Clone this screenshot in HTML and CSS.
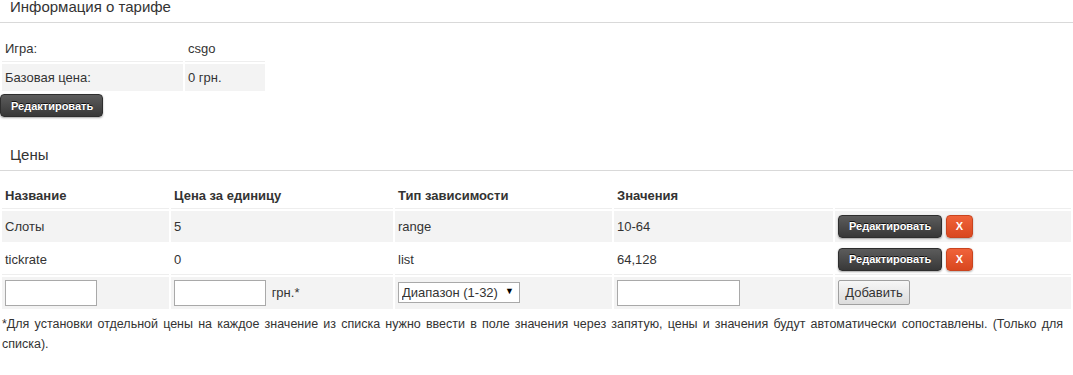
FILE: index.html
```
<!DOCTYPE html>
<html lang="ru">
<head>
    <meta charset="UTF-8">
    <title>Информация о тарифе</title>
    <link rel="stylesheet" href="styles.css">
</head>
<body>
    <h3 class="section-title">Информация о тарифе</h3>
    <table class="info-table">
        <tr>
            <td class="info-label">Игра:</td>
            <td class="info-value">csgo</td>
        </tr>
        <tr class="odd">
            <td class="info-label">Базовая цена:</td>
            <td class="info-value">0 грн.</td>
        </tr>
    </table>
    <button class="btn-dark">Редактировать</button>

    <h3 class="section-title second">Цены</h3>
    <table class="prices-table">
        <colgroup>
            <col style="width: 167px">
            <col style="width: 222px">
            <col style="width: 217px">
            <col style="width: 219px">
            <col>
        </colgroup>
        <tr class="head">
            <th>Название</th>
            <th>Цена за единицу</th>
            <th>Тип зависимости</th>
            <th>Значения</th>
            <th></th>
        </tr>
        <tr class="odd">
            <td>Слоты</td>
            <td>5</td>
            <td>range</td>
            <td>10-64</td>
            <td><button class="btn-dark">Редактировать</button> <button class="btn-red">X</button></td>
        </tr>
        <tr>
            <td>tickrate</td>
            <td>0</td>
            <td>list</td>
            <td>64,128</td>
            <td><button class="btn-dark">Редактировать</button> <button class="btn-red">X</button></td>
        </tr>
        <tr class="odd form-row">
            <td><input type="text" class="field"></td>
            <td><input type="text" class="field"> <span class="unit">грн.*</span></td>
            <td>
                <span class="select-wrap">
                    <select class="type-select">
                        <option>Диапазон (1-32)</option>
                        <option>Список</option>
                    </select>
                </span>
            </td>
            <td><input type="text" class="field wide"></td>
            <td><button class="btn-add">Добавить</button></td>
        </tr>
    </table>
    <p class="note">*Для установки отдельной цены на каждое значение из списка нужно ввести в поле значения через запятую, цены и значения будут автоматически сопоставлены. (Только для списка).</p>
</body>
</html>
```

FILE: styles.css
```
body {
    margin: 0;
    font-family: "Liberation Sans", Arial, sans-serif;
    font-size: 13px;
    color: #333;
    background: #fff;
}

.section-title {
    margin: 0;
    padding: 0 10px 5px;
    height: 17px;
    line-height: 14px;
    font-size: 15px;
    font-weight: normal;
    color: #333;
    border-bottom: 1px solid #d9d9d9;
}

.section-title.second {
    margin-top: 31px;
    line-height: 14px;
}

table {
    border-spacing: 2px;
}

td, th {
    padding: 0 3px;
    text-align: left;
    border-bottom: 1px solid #eeeeee;
}

tr.odd td {
    background: #f3f3f3;
    border-bottom-color: #f3f3f3;
}

.info-table {
    margin-top: 10px;
}

.info-table td {
    height: 26px;
}

.info-label {
    width: 175px;
}

.info-value {
    width: 74px;
}

.btn-dark {
    height: 23px;
    padding: 0 10px;
    font-family: "Liberation Sans", Arial, sans-serif;
    font-size: 11px;
    font-weight: bold;
    color: #fff;
    text-shadow: 0 -1px 0 #111;
    background: linear-gradient(to bottom, #5c5c5c, #383838);
    border: 1px solid #2e2e2e;
    border-radius: 4px;
    box-shadow: 0 1px 2px rgba(0, 0, 0, 0.35);
    cursor: pointer;
    vertical-align: middle;
}

body > .btn-dark {
    margin-top: 1px;
    display: block;
    width: 103px;
}

.btn-red {
    height: 23px;
    width: 27px;
    padding: 0;
    margin-left: 0;
    font-family: "Liberation Sans", Arial, sans-serif;
    font-size: 11px;
    font-weight: bold;
    color: #fff;
    background: linear-gradient(to bottom, #f0633a, #d9471f);
    border: 1px solid #c9441f;
    border-radius: 4px;
    box-shadow: 0 1px 2px rgba(0, 0, 0, 0.3);
    vertical-align: middle;
}

.prices-table {
    width: 1073px;
    margin-top: 9px;
}

.prices-table th {
    height: 26px;
    font-weight: bold;
}

.prices-table td {
    height: 30px;
}

.prices-table .form-row td {
    height: 31px;
}

.field {
    box-sizing: border-box;
    width: 92px;
    height: 26px;
    padding: 1px 3px;
    border: 1px solid #a9a9a9;
    font-family: "Liberation Sans", Arial, sans-serif;
    font-size: 13px;
    vertical-align: middle;
}

.field.wide {
    width: 123px;
}

.unit {
    margin-left: 2px;
    vertical-align: middle;
}

.select-wrap {
    position: relative;
    display: inline-block;
    vertical-align: middle;
}

.select-wrap::after {
    content: "▼";
    position: absolute;
    right: 6px;
    top: 4px;
    font-size: 9px;
    color: #000;
    pointer-events: none;
}

.type-select {
    appearance: none;
    -webkit-appearance: none;
    box-sizing: border-box;
    width: 122px;
    height: 21px;
    padding: 0 3px;
    border: 1px solid #a9a9a9;
    border-radius: 0;
    background: #fff;
    font-family: "Liberation Sans", Arial, sans-serif;
    font-size: 13px;
    color: #333;
}

.btn-add {
    box-sizing: border-box;
    width: 72px;
    height: 25px;
    padding: 0 6px;
    font-family: "Liberation Sans", Arial, sans-serif;
    font-size: 13px;
    color: #333;
    background: linear-gradient(to bottom, #f7f7f7, #dcdcdc);
    border: 1px solid #a0a0a0;
    border-radius: 2px;
    vertical-align: middle;
}

.note {
    margin: 3px 0 0;
    padding: 0 10px 0 2px;
    line-height: 20px;
    font-size: 12.5px;
    text-align: justify;
}
```
